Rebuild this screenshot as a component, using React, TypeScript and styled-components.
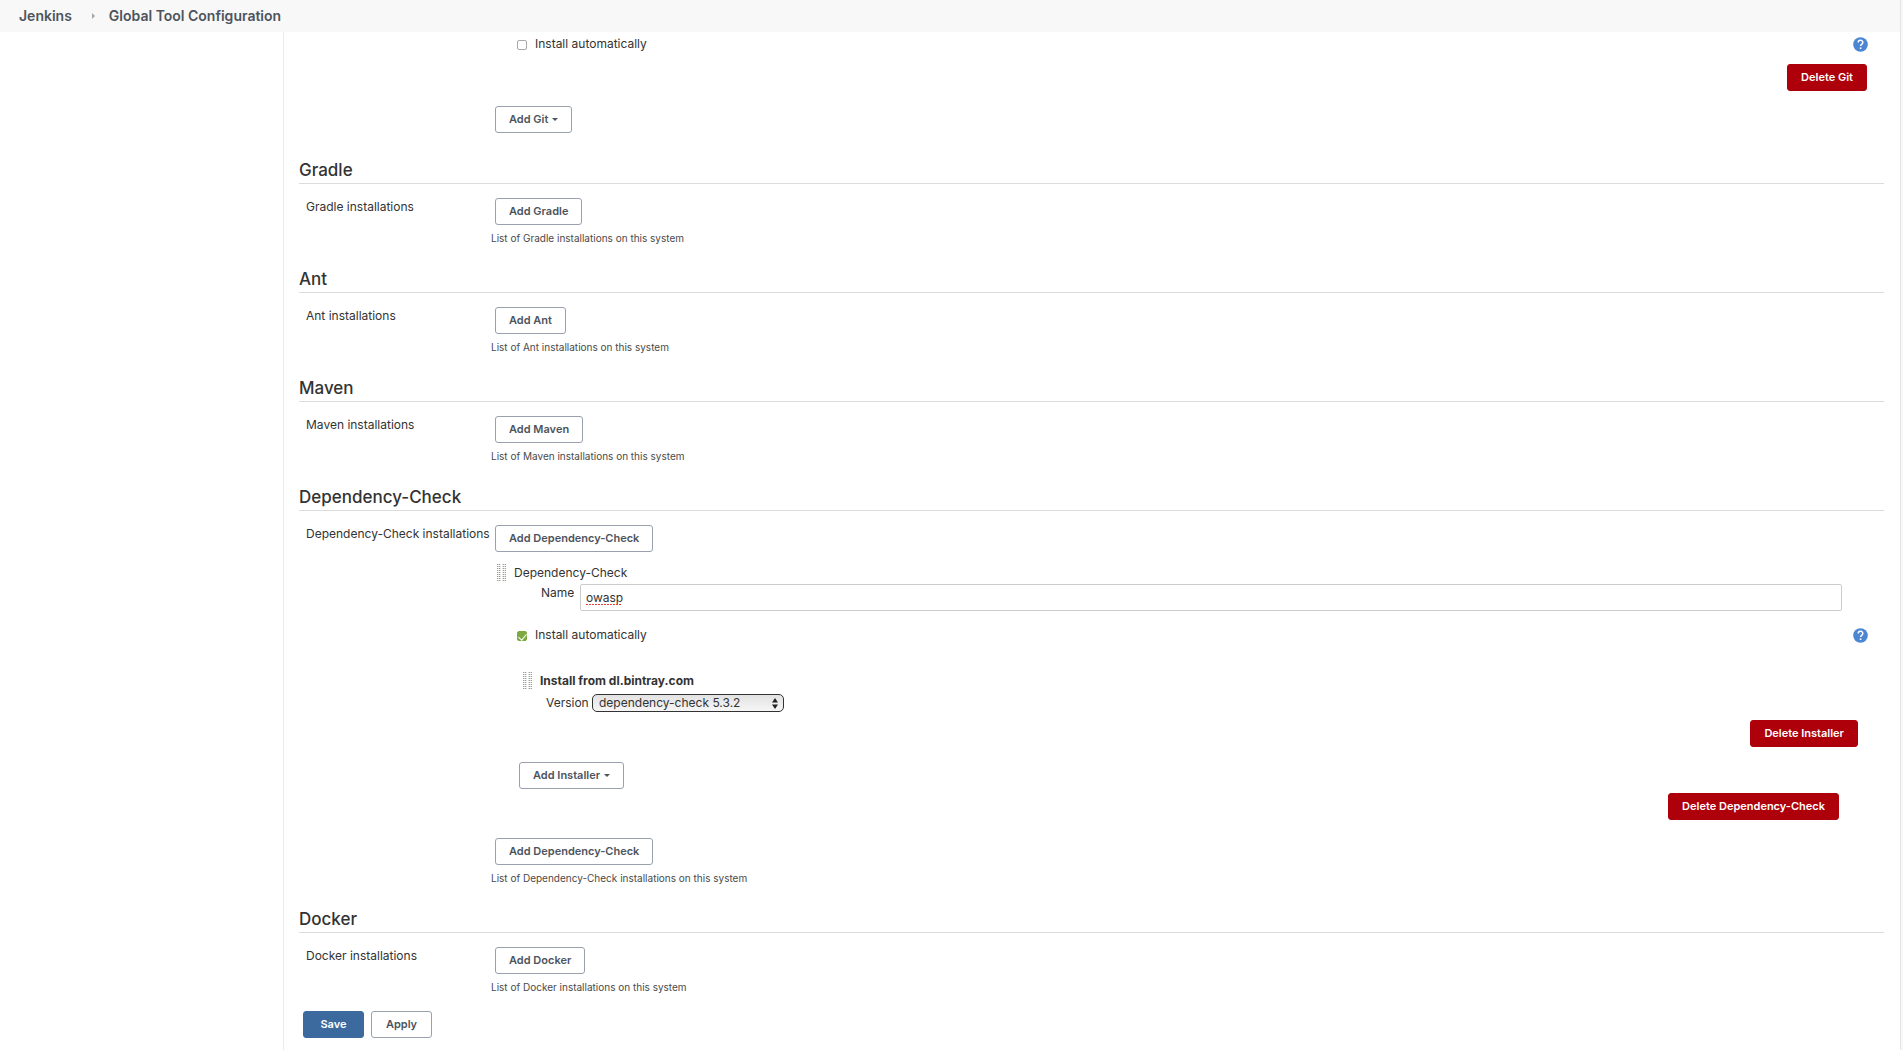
import React, { useState } from "react";
import styled, { createGlobalStyle } from "styled-components";

const GlobalStyle = createGlobalStyle`
  * { box-sizing: border-box; }
  body {
    margin: 0;
    background: #f8f8f8;
    color: #333;
    font-family: Inter, "Liberation Sans", sans-serif;
    font-size: 12px;
    line-height: 18px;
  }
  button, input, select { font: inherit; color: inherit; margin: 0; }
`;

const Page = styled.div`
  min-height: 100vh;
  display: flex;
  flex-direction: column;
  margin-right: 2px;
  border-right: 1px solid #e4e4e4;
  background: #fff;
`;

const Breadcrumbs = styled.nav`
  display: flex;
  align-items: center;
  height: 32px;
  padding: 0 19px 1px;
  background: #f8f8f8;
  font-size: 14px;
  font-weight: 600;
`;

const Crumb = styled.a`
  color: #4d545d;
  text-decoration: none;
`;

const CrumbArrow = styled.svg`
  width: 3px;
  height: 6px;
  margin: 0 14px 0 20px;
  fill: #a6a6a6;
`;

const Columns = styled.div`
  flex: 1;
  display: grid;
  grid-template-columns: 283px 1fr;
`;

const SidePanel = styled.aside``;

const Main = styled.main`
  padding: 0 16px 12px 15px;
  border-left: 1px solid #eaeaea;
`;

const Section = styled.section`
  margin-bottom: 20px;
  &:first-of-type { margin-bottom: 25px; }
  &:last-of-type { margin-bottom: 15px; }
`;

const Heading = styled.h2`
  margin: 0 0 14px;
  padding-bottom: 1px;
  border-bottom: 1px solid #dcdcdc;
  font-size: 17px;
  line-height: 24px;
  font-weight: 500;
`;

const Entry = styled.div`
  display: grid;
  grid-template-columns: 185px 1fr;
  padding-left: 7px;
`;

const EntryLabel = styled.div`
  white-space: nowrap;
`;

const Description = styled.div`
  margin-top: 4px;
  font-size: 10px;
  color: #4a4a4a;
`;

const Indent = styled.div<{ $left?: number; $right?: number; $top?: number }>`
  display: flex;
  align-items: flex-start;
  padding-left: ${(p) => p.$left ?? 4}px;
  padding-right: ${(p) => p.$right ?? 0}px;
  margin-top: ${(p) => p.$top ?? 0}px;
`;

const DeleteRow = styled(Indent)`
  justify-content: flex-end;
`;

const Button = styled.button<{ $kind?: "danger" | "primary" }>`
  display: inline-flex;
  align-items: center;
  justify-content: center;
  gap: 4px;
  height: 27px;
  padding: 0 13px 1px;
  border: 1px solid
    ${(p) => (p.$kind === "danger" ? "#ad000b" : p.$kind === "primary" ? "#3c6a9f" : "#98a1ad")};
  border-radius: 3px;
  background: ${(p) => (p.$kind === "danger" ? "#ad000b" : p.$kind === "primary" ? "#3c6a9f" : "#fff")};
  color: ${(p) => (p.$kind ? "#fff" : "#4d545d")};
  font-size: 11px;
  font-weight: 600;
  white-space: nowrap;
  cursor: pointer;
`;

const Caret = styled.span`
  border: 3px solid transparent;
  border-top-color: currentColor;
  border-bottom: 0;
`;

const CheckRow = styled.div<{ $top?: number }>`
  display: flex;
  align-items: center;
  height: 24px;
  margin-top: ${(p) => p.$top ?? 0}px;
  padding: 0 16px 0 26px;
`;

const CheckLabel = styled.label`
  display: flex;
  align-items: center;
  gap: 8px;
  margin-right: auto;
`;

const Checkbox = styled.input`
  appearance: none;
  display: grid;
  place-items: center;
  width: 10px;
  height: 10px;
  margin-top: 2px;
  border: 1px solid #a9a9a9;
  border-radius: 2px;
  background: #fff;
  &:checked {
    border-color: #7da942;
    background: #7da942;
  }
  &:checked::after {
    content: "";
    width: 4px;
    height: 7px;
    border: solid #fff;
    border-width: 0 1px 1px 0;
    transform: rotate(40deg);
  }
`;

const HelpButton = styled.button`
  display: flex;
  padding: 0;
  border: 0;
  background: none;
  cursor: pointer;
`;

const Grip = styled.span`
  width: 9px;
  height: 17px;
  margin-right: 8px;
  background:
    linear-gradient(90deg, transparent 4px, #fff 4px 5px, transparent 5px),
    repeating-linear-gradient(transparent 0 1px, #fff 1px 2px),
    repeating-linear-gradient(90deg, #9c9c94 0 1px, #dcdcd8 1px 2px);
`;

const GroupTitle = styled.div<{ $bold?: boolean }>`
  font-weight: ${(p) => (p.$bold ? 700 : 400)};
`;

const NameLabel = styled.label`
  width: 39px;
`;

const TextField = styled.div`
  flex: 1;
  display: grid;
  position: relative;
`;

const TextInput = styled.input`
  min-width: 0;
  height: 27px;
  padding: 0 5px;
  border: 1px solid #ccc;
  border-radius: 2px;
  background: #fff;
`;

const SpellingMark = styled.span`
  position: absolute;
  left: 6px;
  bottom: 6px;
  height: 1px;
  overflow: hidden;
  color: transparent;
  background: repeating-linear-gradient(90deg, #e8403c 0 2px, transparent 2px 3px);
  pointer-events: none;
`;

const VersionLabel = styled.label`
  width: 46px;
`;

const SelectBox = styled.div`
  position: relative;
  display: flex;
  width: 192px;
`;

const Select = styled.select`
  appearance: none;
  width: 100%;
  height: 18px;
  padding: 0 20px 0 6px;
  border: 1px solid #333;
  border-radius: 5px;
  background: linear-gradient(#e2e2e2, #f6f6f6);
  line-height: 16px;
`;

const SelectArrows = styled.svg`
  position: absolute;
  right: 6px;
  top: 4px;
  width: 6px;
  height: 11px;
  fill: #222;
  pointer-events: none;
`;

const Actions = styled.div`
  display: flex;
  gap: 7px;
  padding-left: 4px;
`;

const ActionButton = styled(Button)`
  width: 61px;
`;

function Help() {
  return (
    <HelpButton type="button" aria-label="Help for feature: Install automatically">
      <svg width="15" height="15" viewBox="0 0 15 15">
        <circle cx="7.5" cy="7.5" r="7.3" fill="#4a86d2" />
        <path d="M5.2 5.4a2.3 2.2 0 1 1 3.7 1.7c-.9.7-1.3 1-1.3 2" fill="none" stroke="#fff" strokeWidth="1.5" />
        <rect x="6.8" y="10.4" width="1.6" height="1.6" fill="#fff" />
      </svg>
    </HelpButton>
  );
}

function InstallAutomatically({ initial, top }: { initial: boolean; top?: number }) {
  const [on, setOn] = useState(initial);
  return (
    <CheckRow $top={top}>
      <CheckLabel>
        <Checkbox type="checkbox" checked={on} onChange={(e) => setOn(e.target.checked)} />
        Install automatically
      </CheckLabel>
      <Help />
    </CheckRow>
  );
}

function ToolSection({ tool, children }: { tool: string; children?: React.ReactNode }) {
  return (
    <Section>
      <Heading>{tool}</Heading>
      <Entry>
        <EntryLabel>{tool} installations</EntryLabel>
        <div>
          <Indent>
            <Button type="button">Add {tool}</Button>
          </Indent>
          {children}
          <Description>List of {tool} installations on this system</Description>
        </div>
      </Entry>
    </Section>
  );
}

export default function App() {
  const [name, setName] = useState("owasp");
  return (
    <>
      <GlobalStyle />
      <Page>
        <Breadcrumbs aria-label="Breadcrumb">
          <Crumb href="#">Jenkins</Crumb>
          <CrumbArrow viewBox="0 0 3 6">
            <path d="M0 0l3 3-3 3z" />
          </CrumbArrow>
          <Crumb href="#">Global Tool Configuration</Crumb>
        </Breadcrumbs>
        <Columns>
          <SidePanel />
          <Main>
            <Section>
              <Entry>
                <EntryLabel />
                <div>
                  <InstallAutomatically initial={false} />
                  <DeleteRow $top={8} $right={17}>
                    <Button type="button" $kind="danger">Delete Git</Button>
                  </DeleteRow>
                  <Indent $top={15}>
                    <Button type="button">
                      Add Git <Caret />
                    </Button>
                  </Indent>
                </div>
              </Entry>
            </Section>
            <ToolSection tool="Gradle" />
            <ToolSection tool="Ant" />
            <ToolSection tool="Maven" />
            <ToolSection tool="Dependency-Check">
              <Indent $left={6} $top={12}>
                <Grip />
                <GroupTitle>Dependency-Check</GroupTitle>
              </Indent>
              <Indent $left={50} $right={42} $top={2}>
                <NameLabel htmlFor="tool-name">Name</NameLabel>
                <TextField>
                  <TextInput
                    id="tool-name"
                    spellCheck={false}
                    value={name}
                    onChange={(e) => setName(e.target.value)}
                  />
                  {name === "owasp" && <SpellingMark style={{ width: name.length * 7 }} />}
                </TextField>
              </Indent>
              <InstallAutomatically initial top={12} />
              <Indent $left={32} $top={25}>
                <Grip />
                <GroupTitle $bold>Install from dl.bintray.com</GroupTitle>
              </Indent>
              <Indent $left={55} $top={4}>
                <VersionLabel htmlFor="tool-version">Version</VersionLabel>
                <SelectBox>
                  <Select id="tool-version">
                    <option>dependency-check 5.3.2</option>
                  </Select>
                  <SelectArrows viewBox="0 0 6 11">
                    <path d="M3 0l3 4.5H0zM3 11l3-4.5H0z" />
                  </SelectArrows>
                </SelectBox>
              </Indent>
              <DeleteRow $top={8} $right={26}>
                <Button type="button" $kind="danger">Delete Installer</Button>
              </DeleteRow>
              <Indent $left={28} $top={15}>
                <Button type="button">
                  Add Installer <Caret />
                </Button>
              </Indent>
              <DeleteRow $top={4} $right={45}>
                <Button type="button" $kind="danger">Delete Dependency-Check</Button>
              </DeleteRow>
              <Indent $top={18}>
                <Button type="button">Add Dependency-Check</Button>
              </Indent>
            </ToolSection>
            <ToolSection tool="Docker" />
            <Actions>
              <ActionButton type="submit" $kind="primary">Save</ActionButton>
              <ActionButton type="button">Apply</ActionButton>
            </Actions>
          </Main>
        </Columns>
      </Page>
    </>
  );
}
